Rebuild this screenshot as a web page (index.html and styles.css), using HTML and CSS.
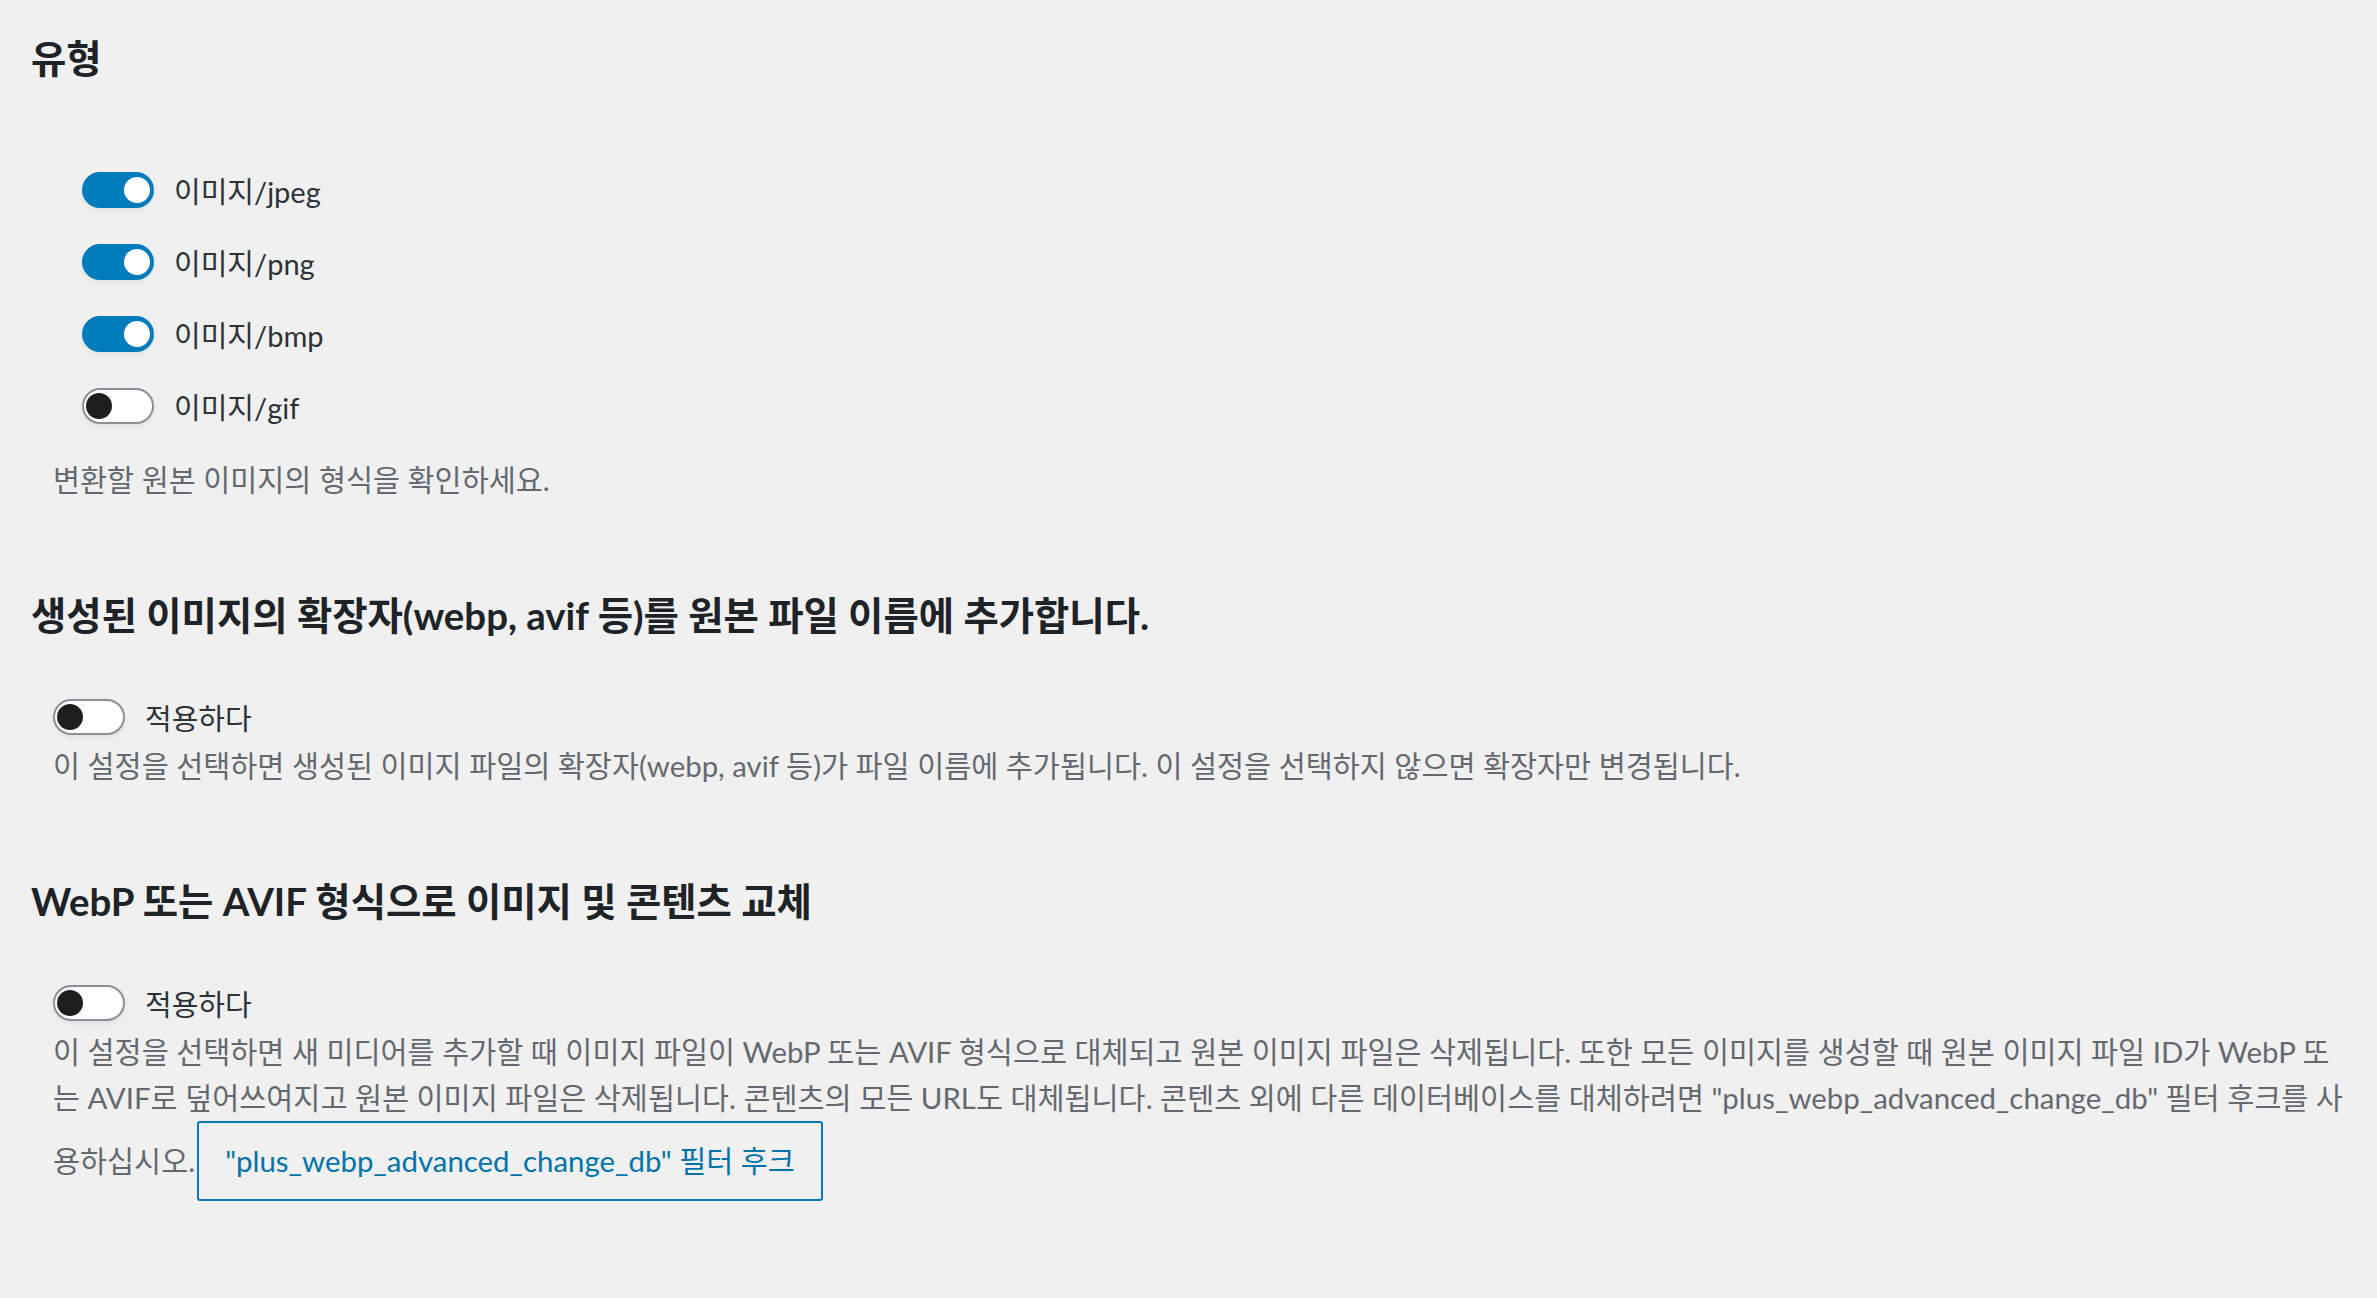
FILE: index.html
```html
<!DOCTYPE html>
<html lang="ko">
<head>
<meta charset="utf-8">
<title>설정</title>
<link rel="stylesheet" href="styles.css">
</head>
<body>
<main class="page">
  <section class="setting">
    <h2 class="setting-title">유형</h2>
    <ul class="type-list">
      <li class="toggle-row"><span class="switch switch-on"></span><span class="toggle-label">이미지/jpeg</span></li>
      <li class="toggle-row"><span class="switch switch-on"></span><span class="toggle-label">이미지/png</span></li>
      <li class="toggle-row"><span class="switch switch-on"></span><span class="toggle-label">이미지/bmp</span></li>
      <li class="toggle-row"><span class="switch"></span><span class="toggle-label">이미지/gif</span></li>
    </ul>
    <p class="setting-desc desc-first">변환할 원본 이미지의 형식을 확인하세요.</p>
  </section>

  <section class="setting">
    <h2 class="setting-title">생성된 이미지의 확장자(webp, avif 등)를 원본 파일 이름에 추가합니다.</h2>
    <div class="setting-body">
      <div class="toggle-row"><span class="switch"></span><span class="toggle-label">적용하다</span></div>
      <p class="setting-desc">이 설정을 선택하면 생성된 이미지 파일의 확장자(webp, avif 등)가 파일 이름에 추가됩니다. 이 설정을 선택하지 않으면 확장자만 변경됩니다.</p>
    </div>
  </section>

  <section class="setting">
    <h2 class="setting-title">WebP 또는 AVIF 형식으로 이미지 및 콘텐츠 교체</h2>
    <div class="setting-body">
      <div class="toggle-row"><span class="switch"></span><span class="toggle-label">적용하다</span></div>
      <p class="setting-desc">이 설정을 선택하면 새 미디어를 추가할 때 이미지 파일이 WebP 또는 AVIF 형식으로 대체되고 원본 이미지 파일은 삭제됩니다. 또한 모든 이미지를 생성할 때 원본 이미지 파일 ID가 WebP 또는 AVIF로 덮어쓰여지고 원본 이미지 파일은 삭제됩니다. 콘텐츠의 모든 URL도 대체됩니다. 콘텐츠 외에 다른 데이터베이스를 대체하려면 "plus_webp_advanced_change_db" 필터 후크를 사용하십시오.<a class="hook-link" href="#">"plus_webp_advanced_change_db" 필터 후크</a></p>
    </div>
  </section>
</main>
</body>
</html>
```

FILE: styles.css
```css
html, body {
  margin: 0;
  padding: 0;
  background: #f0f0f1;
}

.page {
  font-family: Lato, "Noto Sans CJK KR", sans-serif;
  color: #3c434a;
  padding: 38px 30px 0 31px;
}

.setting {
  margin: 0 0 92px 0;
}

.setting-title {
  margin: 0;
  font-size: 38.4px;
  line-height: 40px;
  font-weight: 700;
  color: #1d2327;
}

.type-list {
  list-style: none;
  margin: 94px 0 0 0;
  padding: 0 0 0 51px;
  display: flex;
  flex-direction: column;
  gap: 36px;
}

.setting-body {
  margin-top: 64px;
  padding-left: 22px;
}

.toggle-row {
  display: flex;
  align-items: center;
  gap: 20px;
  height: 36px;
}

.switch {
  position: relative;
  box-sizing: border-box;
  width: 72px;
  height: 36px;
  flex: 0 0 72px;
  border: 2px solid #8c8f94;
  border-radius: 18px;
  background: #fff;
  box-shadow: 0 3px 5px rgba(0, 0, 0, 0.06);
}

.switch::after {
  content: "";
  position: absolute;
  left: 2px;
  top: 3px;
  width: 26px;
  height: 26px;
  border-radius: 50%;
  background: #1e1e1e;
}

.switch-on {
  background: #007cba;
  border-color: #007cba;
}

.switch-on::after {
  left: 40px;
  background: #fff;
}

.toggle-label {
  font-size: 29px;
  line-height: 36px;
  padding-top: 4px;
  color: #2c3338;
}

.setting-desc {
  margin: 8px 0 0 0;
  font-size: 29.4px;
  line-height: 46px;
  color: #646970;
}

.desc-first {
  margin-top: 33px;
  padding-left: 22px;
}

.hook-link {
  display: inline-block;
  margin-left: 2px;
  padding: 15px 26px;
  border: 2px solid #0a78b6;
  border-radius: 3px;
  color: #0073aa;
  text-decoration: none;
  line-height: 46px;
}
```
